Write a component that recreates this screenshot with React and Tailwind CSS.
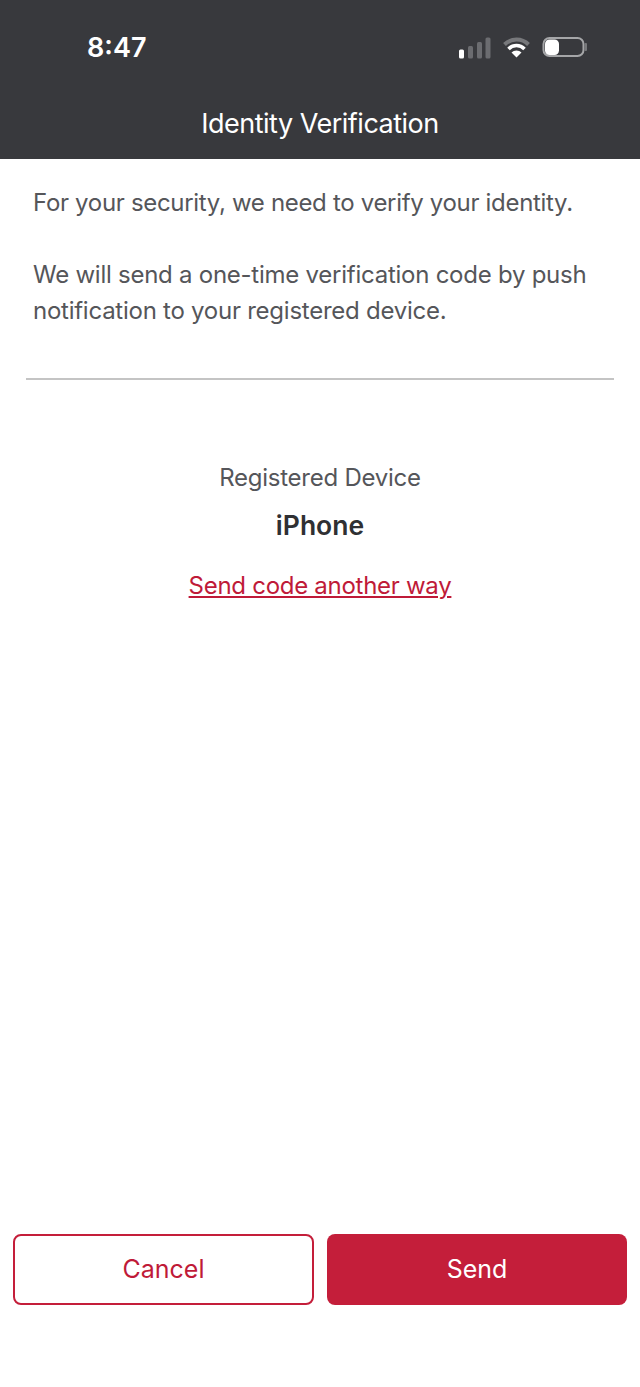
export default function App() {
  return (
    <div className="w-[640px] h-[1387px] bg-white flex flex-col font-['Inter','Liberation_Sans',sans-serif] overflow-hidden">
      <header className="h-[159px] bg-[#38393d] text-white flex flex-col shrink-0">
        <div className="h-[90px] flex items-start justify-between pl-[87px] pr-[52px] pt-[30px]">
          <span className="text-[27px] leading-[36px] font-semibold">8:47</span>
          <svg width="130" height="30" viewBox="0 0 130 30" className="mt-[6px]">
            <rect x="1" y="13.5" width="5" height="9" rx="1.5" fill="#fff" />
            <rect x="10" y="10" width="5" height="12.5" rx="1.5" fill="#6b6c70" />
            <rect x="19" y="6" width="5" height="16.5" rx="1.5" fill="#6b6c70" />
            <rect x="27.5" y="1.5" width="5" height="21" rx="1.5" fill="#6b6c70" />
            <path d="M46.5 8.5 A17 17 0 0 1 70.5 8.5" fill="none" stroke="#77787b" strokeWidth="4" />
            <path d="M50.5 13 A11 11 0 0 1 66.5 13" fill="none" stroke="#fff" strokeWidth="3.5" />
            <path d="M53.5 16.5 A7 7 0 0 1 63.5 16.5 L58.5 21.5 Z" fill="#fff" />
            <rect x="85.5" y="2" width="40" height="18" rx="6" fill="none" stroke="#a5a6a8" strokeWidth="2" />
            <rect x="87" y="3.5" width="14" height="15.5" rx="4.5" fill="#fff" />
            <rect x="126.5" y="7" width="2.5" height="8" rx="1" fill="#77787b" />
          </svg>
        </div>
        <h1 className="text-[27px] leading-[36px] font-normal text-center tracking-[-0.5px] mt-[16px]">Identity Verification</h1>
      </header>
      <main className="flex-1 flex flex-col text-[#55565a]">
        <div className="px-[33px] pt-[26px] text-[24px] leading-[36px]">
          <p className="tracking-[-0.32px]">For your security, we need to verify your identity.</p>
          <p className="mt-[36px] tracking-[-0.25px]">We will send a one-time verification code by push notification to your registered device.</p>
        </div>
        <hr className="mx-[26px] mt-[49px] border-t-[2px] border-[#c4c4c4]" />
        <div className="flex flex-col items-center mt-[80px]">
          <p className="text-[24px] leading-[36px] tracking-[-0.25px]">Registered Device</p>
          <p className="text-[26.5px] leading-[36px] font-semibold text-[#2f3033] mt-[11px]">iPhone</p>
          <a href="#" className="text-[24px] leading-[36px] tracking-[-0.28px] text-[#bf1a38] underline mt-[25px]">Send code another way</a>
        </div>
        <div className="mt-auto mb-[82px] pl-[13px] flex gap-[13px]">
          <button className="w-[301px] h-[71px] rounded-[8px] border-2 border-[#c41e3a] text-[#bf1a38] bg-white text-[25px]">Cancel</button>
          <button className="w-[300px] h-[71px] rounded-[8px] bg-[#c41e3a] text-white text-[25px]">Send</button>
        </div>
      </main>
    </div>
  );
}
